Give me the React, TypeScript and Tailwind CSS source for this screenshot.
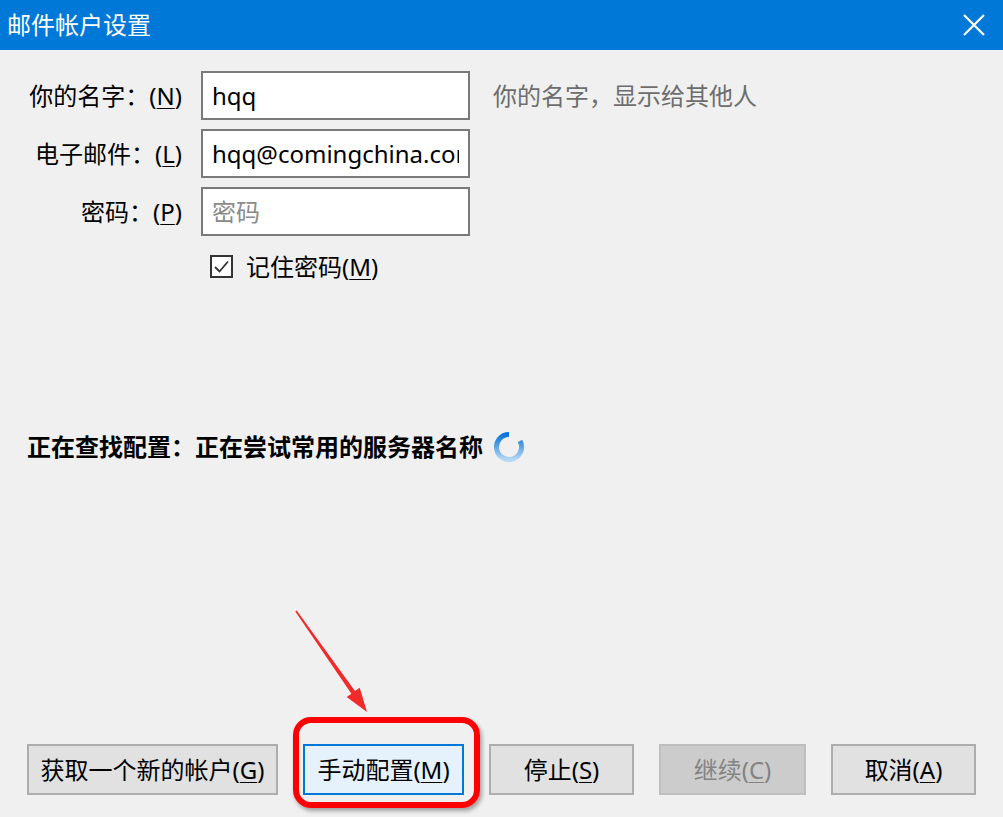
import React from 'react';

const FONT = { fontFamily: '"Noto Sans", "Noto Sans CJK SC", sans-serif' };

function Mn({ children }: { children: React.ReactNode }) {
  return <span className="underline underline-offset-[3px] decoration-1">{children}</span>;
}

function Btn({
  children,
  width,
  variant = 'normal',
}: {
  children: React.ReactNode;
  width: string;
  variant?: 'normal' | 'focus' | 'disabled';
}) {
  const look =
    variant === 'focus'
      ? 'bg-[#e5f1fb] border-[#0078d7] text-black'
      : variant === 'disabled'
        ? 'bg-[#cccccc] border-[#bfbfbf] text-[#838383]'
        : 'bg-[#e1e1e1] border-[#adadad] text-black';
  return (
    <div className={`relative h-[51px] ${width} border-2 ${look} flex items-center justify-center text-[24px] leading-none`}>
      {children}
    </div>
  );
}

function Spinner() {
  return (
    <svg width="32" height="32" viewBox="0 0 32 32" className="ml-[10px]">
      <defs>
        <linearGradient id="spin" x1="0" y1="0" x2="0" y2="1">
          <stop offset="0" stopColor="#0a74d6" />
          <stop offset="1" stopColor="#b5d7f5" />
        </linearGradient>
      </defs>
      <path
        d="M 16 3.5 A 12.5 12.5 0 1 0 27 10"
        fill="none"
        stroke="url(#spin)"
        strokeWidth="5"
      />
    </svg>
  );
}

const inputCls =
  'h-[49px] w-full border-2 border-[#7a7a7a] bg-white px-[9px] text-[24px] text-black outline-none placeholder:text-[#8a8a8a]';

export default function App() {
  return (
    <div className="relative w-[1003px] h-[817px] bg-[#f0f0f0] flex flex-col overflow-hidden" style={FONT}>
      {/* Title bar */}
      <div className="h-[50px] bg-[#0078d7] flex items-center justify-between shrink-0">
        <span className="pl-[7px] text-white text-[24px] leading-none">邮件帐户设置</span>
        <svg width="24" height="24" viewBox="0 0 24 24" className="mr-[17px]">
          <path d="M2 2 L22 22 M22 2 L2 22" stroke="#ffffff" strokeWidth="2.2" />
        </svg>
      </div>

      {/* Form */}
      <div className="pl-[27px] pt-[21px]">
        <div className="grid grid-cols-[155px_269px_auto] gap-x-[19px] gap-y-[9px] items-center">
          <div className="text-right text-[24px] text-black whitespace-nowrap">你的名字：(<Mn>N</Mn>)</div>
          <input className={inputCls} style={FONT} readOnly value="hqq" />
          <div className="pl-[4px] text-[24px] text-[#6d6d6d] whitespace-nowrap">你的名字，显示给其他人</div>

          <div className="text-right text-[24px] text-black whitespace-nowrap">电子邮件：(<Mn>L</Mn>)</div>
          <input className={inputCls} style={FONT} readOnly value="hqq@comingchina.com" />
          <div />

          <div className="text-right text-[24px] text-black whitespace-nowrap">密码：(<Mn>P</Mn>)</div>
          <input className={inputCls} style={FONT} readOnly placeholder="密码" />
          <div />
        </div>

        <div className="mt-[19px] ml-[183px] flex items-center h-[23px]">
          <div className="w-[23px] h-[23px] border-2 border-[#333333] bg-white flex items-center justify-center">
            <svg width="17" height="17" viewBox="0 0 17 17">
              <path d="M2 9 L6.5 13.5 L15 3.5" fill="none" stroke="#333333" strokeWidth="1.8" />
            </svg>
          </div>
          <span className="ml-[13px] text-[24px] leading-[23px] text-black whitespace-nowrap">
            记住密码(<Mn>M</Mn>)
          </span>
        </div>

        <div className="mt-[153px] flex items-center h-[32px]">
          <span className="text-[24px] font-bold text-black whitespace-nowrap">正在查找配置：正在尝试常用的服务器名称</span>
          <Spinner />
        </div>
      </div>

      {/* Buttons */}
      <div className="mt-auto pb-[22px] pl-[27px] flex gap-[25px]">
        <Btn width="w-[251px]">获取一个新的帐户(<Mn>G</Mn>)</Btn>
        <Btn width="w-[161px]" variant="focus">
          手动配置(<Mn>M</Mn>)
          <div className="absolute -left-[12px] -right-[18px] -top-[29px] -bottom-[15px] border-[6px] border-[#ff0000] rounded-[18px] shadow-[2px_3px_4px_rgba(0,0,0,0.35)] pointer-events-none" />
        </Btn>
        <Btn width="w-[145px]">停止(<Mn>S</Mn>)</Btn>
        <Btn width="w-[147px]" variant="disabled">继续(<Mn>C</Mn>)</Btn>
        <Btn width="w-[145px]">取消(<Mn>A</Mn>)</Btn>
      </div>

      {/* Annotation arrow */}
      <svg className="absolute left-0 top-0 pointer-events-none" width="1003" height="817">
        <polygon
          points="296.7,610.5 355,691.1 359.7,687.8 367,712 346.7,697 351.4,693.7 295.3,611.5"
          fill="#f42a2a"
        />
      </svg>
    </div>
  );
}
